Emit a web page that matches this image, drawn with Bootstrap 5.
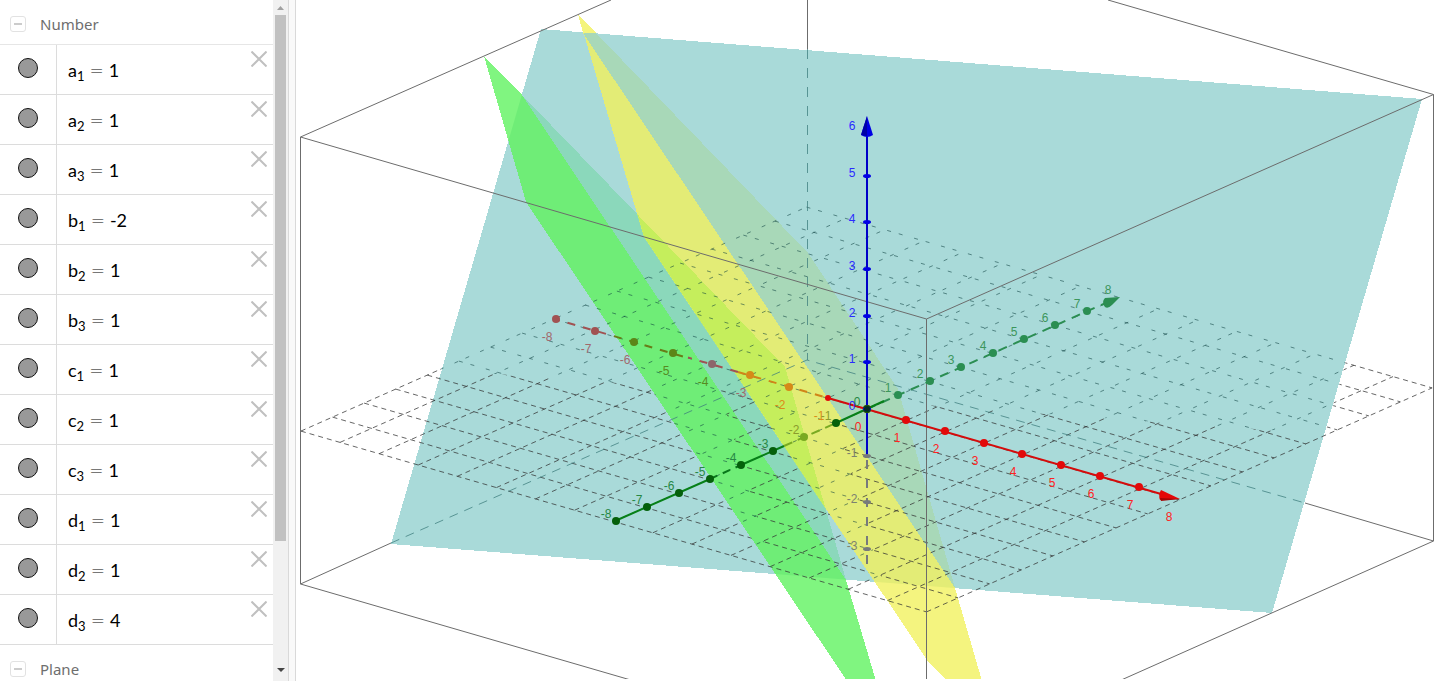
<!DOCTYPE html>
<html lang="en">
<head>
<meta charset="utf-8">
<meta name="viewport" content="width=device-width, initial-scale=1">
<title>3D Graphics – Planes</title>
<link href="https://cdn.jsdelivr.net/npm/bootstrap@5.3.0/dist/css/bootstrap.min.css" rel="stylesheet">
<style>
body { font-family: "Noto Sans", sans-serif; background: #fff; }
.algebra { width: 273px; }
.group-head { height: 45px; padding: 4px 10px 0; border-bottom: 1px solid #e6e6e6; color: #6e6e6e; font-size: 15px; line-height: 24px; gap: 14px; }
.toggle { width: 16px; height: 16px; padding: 0; border: 1px solid #e2e2e2; border-radius: 3px; background: #fff; }
.toggle span { width: 8px; height: 2px; background: #ccc; }
.item { height: 50px; border-bottom: 1px solid #dcdcdc; }
.marble-cell { width: 57px; border-right: 1px solid #dcdcdc; padding: 13px 0 0 18px; }
.marble { width: 20px; height: 20px; padding: 0; border: 1px solid #111; border-radius: 50%; background: #999; }
.formula { font-family: Lato, sans-serif; font-size: 18px; line-height: 24px; color: #000; padding: 13px 0 0 11px; }
.formula sub { font-size: 13px; bottom: -4px; }
.formula .eq { font-family: "DejaVu Sans", sans-serif; font-weight: 200; font-size: 17px; margin: 0 5px; }
.close-btn { width: 16px; height: 16px; padding: 0; border: 0; background: none; margin: 6px 6px 0 0; }
.close-btn svg, .track svg { display: block; }
.track { width: 15px; background: #f1f1f1; padding: 5px 2px; }
.thumb { width: 11px; height: 526px; background: #c1c1c1; margin-top: 4px; }
.splitter { width: 8px; background: #f9f9f9; border-left: 1px solid #d9d9d9; border-right: 1px solid #d9d9d9; }
.view { height: calc(100vh - 2px); min-width: 0; }
.view text { font: 12px "Liberation Sans", Arial, sans-serif; text-anchor: middle; }
</style>
</head>
<body>
<main class="d-flex vh-100 overflow-hidden">
  <section class="algebra flex-shrink-0 overflow-hidden" aria-label="Algebra">
    <div class="group-head d-flex align-items-center"><button class="toggle d-flex align-items-center justify-content-center" aria-label="Collapse Number"><span></span></button>Number</div>
    <div id="items"></div>
    <div class="group-head d-flex align-items-center"><button class="toggle d-flex align-items-center justify-content-center" aria-label="Collapse Plane"><span></span></button>Plane</div>
  </section>
  <div class="track flex-shrink-0 d-flex flex-column align-items-center" aria-hidden="true">
    <svg width="7" height="6"><path d="M0 5L3.500 1L7 5Z" fill="#a0a0a0"/></svg>
    <div class="thumb"></div>
    <svg class="mt-auto" width="8" height="9"><path d="M0 1L4 5L8 1Z" fill="#444"/></svg>
  </div>
  <div class="splitter flex-shrink-0"></div>
  <section class="view flex-grow-1" aria-label="3D view">
    <svg class="d-block w-100 h-100" viewBox="296 0 1144 679" preserveAspectRatio="xMidYMid slice">
      <defs>
        <clipPath id="tealClip"><path d="M541 29L1422 99L1272 613L391 544Z"/></clipPath>
        <clipPath id="greenLeft"><path d="M400 0H606L804 679H400Z"/></clipPath>
        <clipPath id="yellowLeft"><path d="M400 0H712L911 679H400Z"/></clipPath>
        <clipPath id="yellowBand"><path d="M578 14L583 33L955 588L982 681H947L927 660L644 237Z"/></clipPath>
        <g id="hiddenArea">
          <path d="M541 29L1422 99L1325 434L440 370Z"/>
          <path clip-path="url(#greenLeft)" d="M484 56L522 95L846 580L876 681H847L526 202Z"/>
          <path clip-path="url(#yellowLeft)" d="M578 14L583 33L955 588L982 681H947L927 660L644 237Z"/>
        </g>
        <mask id="backMask" maskUnits="userSpaceOnUse" x="296" y="0" width="1144" height="681"><use href="#hiddenArea" fill="#fff"/></mask>
        <mask id="frontMask" maskUnits="userSpaceOnUse" x="296" y="0" width="1144" height="681"><rect x="296" width="1144" height="681" fill="#fff"/><use href="#hiddenArea" fill="#000"/></mask>
      </defs>

      <!-- planes -->
      <g shape-rendering="crispEdges">
        <path d="M541 29L1422 99L1272 613L391 544Z" fill="#a9dad9"/>
        <path d="M522 95L785 367L846 580Z" fill="#8bd8bb"/>
        <path d="M578 14L583 33L596 33Z" fill="#f4f47c"/>
        <path d="M583 33L596 33L808 253L898 389L955 588Z" fill="#a8d8b8"/>
        <path d="M484 56L522 95L846 580L876 681H847L526 202Z" fill="#80f580"/>
        <path clip-path="url(#tealClip)" d="M484 56L522 95L846 580L876 681H847L526 202Z" fill="#6fed77"/>
        <path d="M578 14L583 33L955 588L982 681H947L927 660L644 237Z" fill="#f4f47f"/>
        <path clip-path="url(#tealClip)" d="M578 14L583 33L955 588L982 681H947L927 660L644 237Z" fill="#e3ec76"/>
        <path clip-path="url(#yellowBand)" d="M522 95L785 367L846 580Z" fill="#c5ee5c"/>
      </g>

      <!-- grid and bounding box -->
      <g id="gridBack" mask="url(#backMask)" fill="none" stroke="#0a3c3c" stroke-opacity=".55" stroke-dasharray="4 8 4 12"></g>
      <g id="gridFront" mask="url(#frontMask)" fill="none" stroke="#333" stroke-opacity=".75" stroke-dasharray="5 4"></g>
      <g fill="none" stroke="#3c7c7c" stroke-opacity=".75">
        <path d="M807.500 49V360" stroke-dasharray="10 9"/>
        <path d="M391 543L807 360L1305 503" stroke-dasharray="9 7"/>
      </g>
      <path d="M807.500 0V49M611 0L300.500 137L926.500 319L1433.500 94.500L1108 0M300.500 137V584L629 679.500M391 543L300.500 584M926.500 319V681M1433.500 94.500V541L1119 681M1305 503L1433.500 541" fill="none" stroke="#6c6c6c"/>

      <!-- hidden axis parts -->
      <g fill="none" stroke-width="2">
        <path d="M556 319.500L610 335M688 357.500L738 372" stroke="#a15252" stroke-dasharray="8 8" stroke-dashoffset="4"/>
        <path d="M610 335L688 358" stroke="#687d18" stroke-dasharray="8 8" stroke-dashoffset="12"/>
        <path d="M738 372L828 398" stroke="#d18418" stroke-dasharray="8 8"/>
        <path d="M867 409L1108 302" stroke="#2b8e52" stroke-dasharray="9 7"/>
        <path d="M784 446L836 423" stroke="#79aa22" stroke-dasharray="9 6"/>
        <path d="M710 479L741 465" stroke="#08781b" stroke-dasharray="8 6"/>
        <path d="M867 456V564" stroke="#777a7c" stroke-dasharray="9 10" stroke-dashoffset="-4"/>
      </g>
      <!-- visible axis parts -->
      <g fill="none" stroke-width="2">
        <path d="M828 398L1168 496" stroke="#d50b0b"/>
        <path d="M615 521L710 479M741 465L784 446M836 423L884 401" stroke="#078018"/>
        <path d="M867 457V132" stroke="#0000c8"/>
      </g>
      <path d="M867 116L861 135Q867 139 873 135Z" fill="#0000e4"/><path d="M867 116L861 135L867 136Z" fill="#0000a8"/>
      <path d="M1180 499L1161 490Q1158 495 1160 500Z" fill="#e40808"/><path d="M1180 499L1160 498L1161 501Z" fill="#a50606"/>
      <path d="M1120 297L1105 298Q1101 302 1105 307Q1108 309 1112 305Z" fill="#2b8e52"/>
      <g id="ticks"></g>
      <g id="labels"></g>
    </svg>
  </section>
</main>
<script src="https://cdn.jsdelivr.net/npm/bootstrap@5.3.0/dist/js/bootstrap.bundle.min.js"></script>
<script>
const values = { a: [1, 1, 1], b: [-2, 1, 1], c: [1, 1, 1], d: [1, 1, 4] };
document.getElementById('items').innerHTML = Object.entries(values).flatMap(([name, list]) =>
  list.map((v, i) => `<div class="item d-flex">
    <div class="marble-cell flex-shrink-0"><button class="marble d-block" aria-label="Show ${name}${i + 1}"></button></div>
    <div class="formula flex-grow-1">${name}<sub>${i + 1}</sub><span class="eq">=</span>${v}</div>
    <button class="close-btn" aria-label="Delete ${name}${i + 1}"><svg width="16" height="16" stroke="#c0c0c0" stroke-width="2"><path d="M.5 .5L15.500 15.500M15.500 .5L.5 15.500"/></svg></button>
  </div>`)).join('');

// Parallel projection of space onto the drawing
const project = (x, y, z) => [Math.round(867 + 38.85 * x + 31.4 * y), Math.round(409 + 11.2 * x - 14 * y - 46.7 * z)];
const floor = (x, y) => [866.5 + 39.1 * x + 31.6 * y, 409.5 + 11.3 * x - 14 * y];
let grid = '';
for (let k = -8; k <= 8; k++) {
  grid += `<path d="M${floor(-8, k)}L${floor(8, k)}M${floor(k, -8)}L${floor(k, 8)}"/>`;
}
document.getElementById('gridBack').innerHTML = grid;
document.getElementById('gridFront').innerHTML = grid;

let ticks = '', labels = '';
const tick = ([x, y], rx, ry, color) => { ticks += `<ellipse cx="${x}" cy="${y}" rx="${rx}" ry="${ry}" fill="${color}"/>`; };
const label = ([x, y], dx, dy, n, color) => { labels += `<text x="${x + dx}" y="${y + dy}" fill="${color}">${n}</text>`; };
const xColor = n => n >= -1 ? '#e20a0a' : ({ '-8': '#a15252', '-7': '#a15252', '-4': '#8d666b', '-6': '#5c8618', '-5': '#5c8618' }[n] || '#d68a18');
const yColor = n => n > 0 ? '#2b8e52' : n === -2 ? '#79aa22' : '#05600b';
for (let n = -8; n <= 8; n++) {
  if (n < 8) tick(project(n, 0, 0), n === -1 ? 3 : 4, n === -1 ? 3 : 4, xColor(n));
  if (n < 8) tick(project(0, n, 0), 4, 4, yColor(n));
  const xText = n >= 0 ? '#ff2222' : n === -5 || n === -4 ? '#568b22' : n === -2 || n === -1 ? '#dc8c18' : '#a1686c';
  label(project(n, 0, 0), -9, 22, n, xText);
  label(project(0, n, 0), -10, -3, n, n > 0 ? '#3c965c' : n === -1 || n === -2 ? '#8b9b2c' : '#278745');
}
for (let n = -3; n <= 6; n++) {
  if (n < 6) tick(project(0, 0, n), 4, 2, n < 0 ? '#777a7c' : '#0000e4');
  label(project(0, 0, n), -15, 1, n, n < 0 ? '#7c8270' : '#2a2aff');
}
tick(project(0, 0, 0), 3, 3, '#052b22');
document.getElementById('ticks').innerHTML = ticks;
document.getElementById('labels').innerHTML = labels;
</script>
</body>
</html>
